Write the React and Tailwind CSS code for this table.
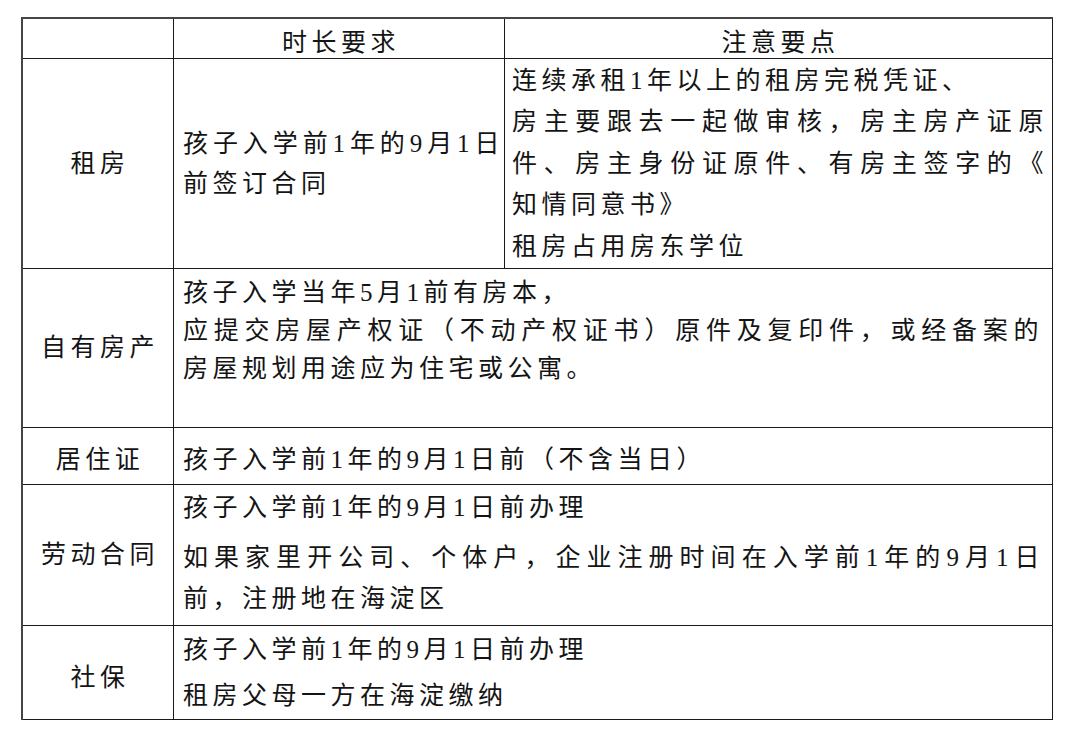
import React from 'react';

const FONT = { fontFamily: '"Liberation Serif", "Noto Sans CJK SC", serif' };

// Une ligne de texte ; "full" = ligne justifiée sur toute la largeur de la cellule.
const Line = ({ children, full }) => (
  <div className={full ? 'text-justify [text-align-last:justify]' : ''}>{children}</div>
);

const cell = 'border-r border-b border-[#1a1a1a]';
const label = `${cell} flex items-center justify-center pl-[4px]`;

export default function App() {
  return (
    <div className="min-h-[741px] bg-white pt-[17px] pl-[21px]" style={FONT}>
      <div className="grid grid-cols-[151px_331px_548px] grid-rows-[40px_210px_159px_57px_141px_94px] w-[1032px] border-l-2 border-t-2 border-[#454545] text-[25px] tracking-[4.5px] text-[#141414]">
        {/* En-tête */}
        <div className={cell} />
        <div className={`${cell} flex items-center justify-center pt-[7px] pl-[4px] leading-none`}>时长要求</div>
        <div className={`${cell} flex items-center justify-center pt-[7px] pl-[4px] leading-none`}>注意要点</div>

        {/* 租房 */}
        <div className={label}>租房</div>
        <div className={`${cell} flex flex-col justify-center pl-[9px] leading-[40px]`}>
          <Line full>孩子入学前1年的9月1日</Line>
          <Line>前签订合同</Line>
        </div>
        <div className={`${cell} flex flex-col justify-center pl-[7px] pr-[4px] leading-[41.5px]`}>
          <Line>连续承租1年以上的租房完税凭证、</Line>
          <Line full>房主要跟去一起做审核，房主房产证原</Line>
          <Line full>件、房主身份证原件、有房主签字的《</Line>
          <Line>知情同意书》</Line>
          <Line>租房占用房东学位</Line>
        </div>

        {/* 自有房产 */}
        <div className={label}>自有房产</div>
        <div className={`${cell} col-span-2 pt-[5px] pl-[9px] pr-[9px] leading-[38px]`}>
          <Line>孩子入学当年5月1前有房本，</Line>
          <Line full>应提交房屋产权证（不动产权证书）原件及复印件，或经备案的</Line>
          <Line>房屋规划用途应为住宅或公寓。</Line>
        </div>

        {/* 居住证 */}
        <div className={`${label} pt-[8px]`}>居住证</div>
        <div className={`${cell} col-span-2 flex items-center pt-[8px] pl-[9px] leading-[40px]`}>
          <Line>孩子入学前1年的9月1日前（不含当日）</Line>
        </div>

        {/* 劳动合同 */}
        <div className={label}>劳动合同</div>
        <div className={`${cell} col-span-2 flex flex-col justify-center pb-[4px] pl-[9px] pr-[8px] leading-[41px]`}>
          <Line>孩子入学前1年的9月1日前办理</Line>
          <div className="mt-[9px]">
            <Line full>如果家里开公司、个体户，企业注册时间在入学前1年的9月1日</Line>
            <Line>前，注册地在海淀区</Line>
          </div>
        </div>

        {/* 社保 */}
        <div className={`${label} pt-[10px]`}>社保</div>
        <div className={`${cell} col-span-2 flex flex-col justify-center pl-[9px] leading-[41px]`}>
          <Line>孩子入学前1年的9月1日前办理</Line>
          <div className="mt-[5px]">
            <Line>租房父母一方在海淀缴纳</Line>
          </div>
        </div>
      </div>
    </div>
  );
}
